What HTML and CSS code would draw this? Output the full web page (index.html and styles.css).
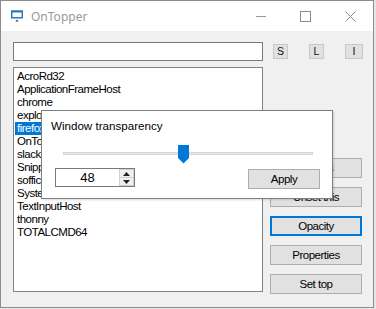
FILE: index.html
```html
<!DOCTYPE html>
<html lang="en">
<head>
    <meta charset="UTF-8">
    <meta name="viewport" content="width=device-width, initial-scale=1.0">
    <title>OnTopper</title>
    <link rel="stylesheet" href="styles.css">
</head>
<body>
    <div class="window">
        <div class="titlebar">
            <svg class="app-icon" width="12" height="12" viewBox="0 0 12 12">
                <rect x="0.75" y="1.25" width="10.5" height="6.5" fill="none" stroke="#2b78c2" stroke-width="1.5"/>
                <rect x="0" y="0.5" width="12" height="2" fill="#2b78c2"/>
                <path d="M4.5 11.5 L6 9.5 L7.5 11.5 Z" fill="#333"/>
            </svg>
            <span class="title">OnTopper</span>
            <div class="caption">
                <div class="cap-btn">
                    <svg width="10" height="10" viewBox="0 0 10 10"><path d="M0 5.5 H10" stroke="#9a9a9a"/></svg>
                </div>
                <div class="cap-btn">
                    <svg width="11" height="11" viewBox="0 0 11 11"><rect x="0.5" y="0.5" width="10" height="10" fill="none" stroke="#8a8a8a"/></svg>
                </div>
                <div class="cap-btn">
                    <svg width="11" height="11" viewBox="0 0 11 11"><path d="M0.5 0.5 L10.5 10.5 M10.5 0.5 L0.5 10.5" stroke="#8a8a8a"/></svg>
                </div>
            </div>
        </div>
        <div class="client">
            <div class="top-row">
                <input type="text" class="search">
                <div class="letter-buttons">
                    <button class="letter-btn">S</button>
                    <button class="letter-btn">L</button>
                    <button class="letter-btn wide">I</button>
                </div>
            </div>
            <div class="main-row">
                <ul class="process-list">
                    <li>AcroRd32</li>
                    <li>ApplicationFrameHost</li>
                    <li>chrome</li>
                    <li>explorer</li>
                    <li class="selected">firefox</li>
                    <li>OnTopper</li>
                    <li>slack</li>
                    <li>SnippingTool</li>
                    <li>soffice</li>
                    <li>SystemSettings</li>
                    <li>TextInputHost</li>
                    <li>thonny</li>
                    <li>TOTALCMD64</li>
                </ul>
                <div class="actions">
                    <button class="action-btn">Set this</button>
                    <button class="action-btn">Unset this</button>
                    <button class="action-btn focused">Opacity</button>
                    <button class="action-btn">Properties</button>
                    <button class="action-btn">Set top</button>
                </div>
            </div>

            <div class="dialog">
                <div class="dialog-title">Window transparency</div>
                <div class="slider">
                    <div class="track"></div>
                    <svg class="thumb" width="11" height="19" viewBox="0 0 11 19">
                        <path d="M0 0 H11 V13 L5.5 18.5 L0 13 Z" fill="#0078d7"/>
                    </svg>
                </div>
                <div class="dialog-footer">
                    <div class="spin">
                        <div class="spin-value">48</div>
                        <div class="spin-buttons">
                            <div class="spin-arrow">
                                <svg width="7" height="4" viewBox="0 0 7 4"><path d="M0 4 L3.5 0 L7 4 Z" fill="#222"/></svg>
                            </div>
                            <div class="spin-arrow">
                                <svg width="7" height="4" viewBox="0 0 7 4"><path d="M0 0 L3.5 4 L7 0 Z" fill="#222"/></svg>
                            </div>
                        </div>
                    </div>
                    <button class="apply-btn">Apply</button>
                </div>
            </div>
        </div>
    </div>
</body>
</html>
```

FILE: styles.css
```css
body {
    margin: 0;
    background-color: #e6e6e6;
    font-family: "Liberation Sans", Arial, sans-serif;
}

.window {
    width: 372px;
    height: 306px;
    border: 1px solid #8c8c8c;
    background-color: #f0f0f0;
    display: flex;
    flex-direction: column;
}

/* title bar */
.titlebar {
    height: 30px;
    background-color: white;
    display: flex;
    align-items: center;
    padding-left: 10px;
}
.app-icon {
    display: block;
}
.title {
    margin-left: 8px;
    font-family: "Noto Sans", sans-serif;
    font-size: 12px;
    color: #999;
}
.caption {
    margin-left: auto;
    display: flex;
}
.cap-btn {
    width: 45px;
    height: 30px;
    display: flex;
    align-items: center;
    justify-content: center;
}
.cap-btn svg {
    display: block;
}

/* client area */
.client {
    flex: 1;
    position: relative;
    padding: 11px 10px 0 12px;
}
.top-row {
    display: flex;
    height: 19px;
}
.search {
    width: 250px;
    height: 19px;
    box-sizing: border-box;
    margin: 0;
    padding: 0;
    border: 1px solid #7a7a7a;
    background-color: white;
}
.letter-buttons {
    display: flex;
    align-items: center;
    justify-content: space-between;
    margin-left: 10px;
    width: 90px;
}
.letter-btn {
    width: 15px;
    height: 15px;
    box-sizing: border-box;
    margin: 0;
    padding: 0;
    border: 1px solid #c8c8c8;
    background-color: #e1e1e1;
    font-family: "Liberation Sans", Arial, sans-serif;
    font-size: 10.5px;
    line-height: 13px;
    color: #111;
}
.letter-btn.wide {
    width: 18px;
}

.main-row {
    display: flex;
    margin-top: 6px;
    gap: 7px;
}
.process-list {
    width: 250px;
    height: 225px;
    box-sizing: border-box;
    margin: 0;
    padding: 2px 0 0 1px;
    list-style-type: none;
    border: 1px solid #828282;
    background-color: white;
    font-size: 11.5px;
    letter-spacing: -0.5px;
    color: black;
}
.process-list li {
    height: 13px;
    line-height: 13px;
    padding-left: 2px;
}
.process-list .selected {
    background-color: #0078d7;
    color: white;
}

.actions {
    display: flex;
    flex-direction: column;
    gap: 9px;
    margin-top: 91px;
    width: 92px;
}
.action-btn {
    height: 20px;
    box-sizing: border-box;
    margin: 0;
    padding: 0;
    border: 1px solid #adadad;
    background-color: #e1e1e1;
    font-family: "Liberation Sans", Arial, sans-serif;
    font-size: 11.5px;
    letter-spacing: -0.5px;
    color: black;
}
.action-btn.focused {
    border: 2px solid #0078d7;
}

/* transparency popup */
.dialog {
    position: absolute;
    left: 40px;
    top: 79px;
    width: 292px;
    height: 89px;
    box-sizing: border-box;
    border: 1px solid #7f7f7f;
    background-color: white;
    box-shadow: 1px 1px 2px rgba(0, 0, 0, 0.15);
}
.dialog-title {
    padding: 7px 0 0 9px;
    font-size: 11.6px;
    line-height: 15px;
    color: black;
}
.slider {
    position: relative;
    margin: 12px 0 0 21px;
    width: 250px;
    height: 18px;
}
.track {
    position: absolute;
    left: 0;
    right: 0;
    top: 7px;
    height: 1px;
    border: 1px solid #d6d6d6;
    background-color: #e7e7e7;
}
.thumb {
    position: absolute;
    left: 115px;
    top: 0;
    display: block;
}
.dialog-footer {
    display: flex;
    align-items: flex-start;
    margin: 5px 0 0 13px;
}
.spin {
    display: flex;
    width: 80px;
    height: 19px;
    box-sizing: border-box;
    border: 1px solid #7a7a7a;
    background-color: white;
}
.spin-value {
    flex: 1;
    text-align: center;
    font-size: 13px;
    line-height: 17px;
}
.spin-buttons {
    width: 15px;
    display: flex;
    flex-direction: column;
}
.spin-arrow {
    flex: 1;
    display: flex;
    align-items: center;
    justify-content: center;
    background-color: #f0f0f0;
    border: 1px solid #d0d0d0;
}
.spin-arrow + .spin-arrow {
    border-top: none;
}
.spin-arrow svg {
    display: block;
}
.apply-btn {
    margin: 1px 12px 0 auto;
    width: 72px;
    height: 20px;
    box-sizing: border-box;
    padding: 0;
    border: 1px solid #adadad;
    background-color: #e1e1e1;
    font-family: "Liberation Sans", Arial, sans-serif;
    font-size: 11.5px;
    letter-spacing: -0.5px;
    color: black;
}
```
